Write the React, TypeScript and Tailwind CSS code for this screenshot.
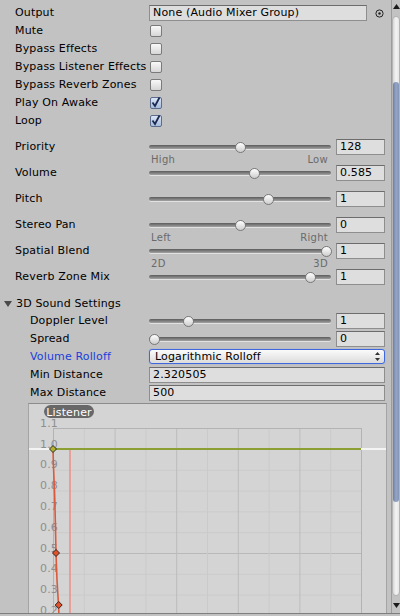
import React from "react";

type SliderProps = {
  label: string;
  value: string;
  pos: number;
  low?: string;
  high?: string;
  indent?: boolean;
  tall?: boolean;
};

const Field = ({ value, width }: { value: string; width: string }) => (
  <div
    className={`${width} h-[16px] shrink-0 flex items-center pl-[3px] pt-[1px] border border-[#8e8e8e] border-t-[#6c6c6c] bg-[#dedede] text-[11px] text-black whitespace-nowrap overflow-hidden`}
  >
    {value}
  </div>
);

const Checkbox = ({ checked }: { checked?: boolean }) =>
  checked ? (
    <div className="ml-[1px] w-[12px] h-[12px] rounded-[2px] border border-[#5c6c8c] bg-gradient-to-b from-[#dbe5f5] to-[#a7bcdd] relative">
      <svg width="12" height="13" viewBox="0 0 12 13" className="absolute left-[-1px] top-[-3px] overflow-visible">
        <path d="M2.5 7.5 L5 11 L9.5 2.5" stroke="#1c2a52" strokeWidth="1.8" fill="none" />
      </svg>
    </div>
  ) : (
    <div className="ml-[1px] w-[12px] h-[12px] rounded-[2px] border border-[#7a7a7a] bg-gradient-to-b from-[#f9f9f9] to-[#d6d6d6]" />
  );

const Label = ({ text, indent, blue }: { text: string; indent?: boolean; blue?: boolean }) => (
  <div
    className={`w-[149px] shrink-0 whitespace-nowrap pt-[1px] ${indent ? "pl-[30px]" : "pl-[15px]"} ${
      blue ? "text-[#1740dc]" : "text-black"
    }`}
  >
    {text}
  </div>
);

const CheckRow = ({ label, checked }: { label: string; checked?: boolean }) => (
  <div className="h-[18px] flex items-center">
    <Label text={label} />
    <Checkbox checked={checked} />
  </div>
);

const SliderRow = ({ label, value, pos, low, high, indent, tall }: SliderProps) => (
  <div className={`${tall ? "h-[26px]" : "h-[18px]"} flex items-start`}>
    <div className="h-[16px] flex items-center">
      <Label text={label} indent={indent} />
    </div>
    <div className="w-[182px] shrink-0 flex flex-col">
      <div className="relative h-[16px] flex items-center">
        <div className="w-full h-[4px] rounded-full bg-gradient-to-b from-[#5c5c5c] to-[#a3a3a3] shadow-[0_1px_0_#e2e2e2]" />
        <div
          className="absolute top-[3px] w-[11px] h-[11px] rounded-full border border-[#787878] bg-gradient-to-b from-white to-[#cdcdcd]"
          style={{ left: 5 + pos * 172 - 5.5 }}
        />
      </div>
      {low && (
        <div className="flex justify-between pl-[2px] pr-[3px] text-[10px] leading-[10px] text-[#6a6a6a] tracking-[0.3px]">
          <span>{low}</span>
          <span>{high}</span>
        </div>
      )}
    </div>
    <div className="ml-[5px]">
      <Field value={value} width="w-[49px]" />
    </div>
  </div>
);

const Graph = () => {
  const y = (v: number) => 45 + (1 - v) * 208;
  const labels = ["1.1", "1.0", "0.9", "0.8", "0.7", "0.6", "0.5", "0.4", "0.3", "0.2"];
  const vx = Array.from({ length: 11 }, (_, i) => 24 + i * 30.8);
  const hy = Array.from({ length: 11 }, (_, i) => i / 10);
  const diamond = (cx: number, cy: number) =>
    `M${cx} ${cy - 3.5} L${cx + 3.5} ${cy} L${cx} ${cy + 3.5} L${cx - 3.5} ${cy} Z`;
  return (
    <svg width="357" height="210" className="block">
      {hy.map((v) => (
        <line
          key={v}
          x1={24}
          x2={332}
          y1={y(v) + 0.5}
          y2={y(v) + 0.5}
          stroke={v === 0.5 ? "#b9b9b9" : "#cbcbcb"}
        />
      ))}
      {vx.map((x, i) => (
        <line
          key={i}
          x1={x + 0.5}
          x2={x + 0.5}
          y1={24}
          y2={210}
          stroke={i === 0 || i === 10 ? "#b3b3b3" : i % 2 === 0 ? "#bcbcbc" : "#cacaca"}
        />
      ))}
      <line x1={24} x2={332} y1={24.5} y2={24.5} stroke="#b3b3b3" />
      {labels.map((l, i) => (
        <text
          key={l}
          x={11}
          y={y(1.1 - i / 10) - 1.5}
          fontSize="11"
          fill="#8e8e8e"
          fontFamily="DejaVu Sans, sans-serif"
        >
          {l}
        </text>
      ))}
      <line x1={41} x2={41} y1={45} y2={210} stroke="#e8928a" strokeOpacity="0.8" strokeWidth="2" />
      <line x1={0} x2={24} y1={45} y2={45} stroke="#f4f4f4" strokeWidth="2" />
      <line x1={332} x2={357} y1={45} y2={45} stroke="#f4f4f4" strokeWidth="2" />
      <line x1={24} x2={332} y1={45} y2={45} stroke="#8c9f33" strokeWidth="2" />
      <polyline
        points="24,45 24.5,63 25.6,89 26.4,120 27,149 28,176 29.5,201 30,212"
        fill="none"
        stroke="#da5a3c"
        strokeWidth="1.6"
      />
      <path d={diamond(24, 45)} fill="#b3b030" stroke="#2e2e20" strokeWidth="1" />
      <path d={diamond(27, 149)} fill="#e0522c" stroke="#3a2018" strokeWidth="1" />
      <path d={diamond(29.7, 201)} fill="#e0522c" stroke="#3a2018" strokeWidth="1" />
      <rect x={15} y={1} width={50} height={13} rx={6.5} fill="#686868" />
      <text
        x={40}
        y={11.5}
        fontSize="11"
        fill="#ffffff"
        textAnchor="middle"
        fontFamily="DejaVu Sans, sans-serif"
      >
        Listener
      </text>
    </svg>
  );
};

const Scrollbar = () => (
  <div className="w-[9px] shrink-0 flex flex-col border-l border-[#9c9c9c]">
    <div className="h-[16px] flex justify-center pt-[4px]">
      <svg width="7" height="5" viewBox="0 0 7 5">
        <path d="M3.5 0 L7 5 L0 5 Z" fill="#1a1a1a" />
      </svg>
    </div>
    <div className="flex-1 rounded-[4px] border border-[#b4b4b4] bg-gradient-to-r from-[#d6d6d6] via-[#f4f4f4] to-[#e6e6e6] pt-[65px]">
      <div className="h-[420px] rounded-[4px] bg-gradient-to-r from-[#6c80a6] via-[#94a5c5] to-[#8495b7]" />
    </div>
    <div className="h-[17px] flex justify-center pt-[7px]">
      <svg width="7" height="5" viewBox="0 0 7 5">
        <path d="M0 0 L7 0 L3.5 5 Z" fill="#1a1a1a" />
      </svg>
    </div>
  </div>
);

export default function App() {
  return (
    <div className="w-[400px] h-[616px] bg-[#c2c2c2] flex flex-col overflow-hidden font-['DejaVu_Sans',sans-serif] text-[11px] tracking-[0.15px]">
      <div className="h-[613px] flex">
        <div className="w-[391px] shrink-0 flex flex-col pt-[4px] overflow-hidden">
          <div className="h-[18px] flex items-center">
            <Label text="Output" />
            <Field value="None (Audio Mixer Group)" width="w-[218px]" />
            <svg width="9" height="9" viewBox="0 0 9 9" className="ml-[8px]">
              <circle cx="4.5" cy="4.5" r="3.6" stroke="#222" fill="none" strokeWidth="1" />
              <circle cx="4.5" cy="4.5" r="1.2" fill="#222" />
            </svg>
          </div>
          <CheckRow label="Mute" />
          <CheckRow label="Bypass Effects" />
          <CheckRow label="Bypass Listener Effects" />
          <CheckRow label="Bypass Reverb Zones" />
          <CheckRow label="Play On Awake" checked />
          <CheckRow label="Loop" checked />

          <div className="mt-[9px] flex flex-col">
            <SliderRow tall label="Priority" value="128" pos={0.5} low="High" high="Low" />
            <SliderRow tall label="Volume" value="0.585" pos={0.585} />
            <SliderRow tall label="Pitch" value="1" pos={0.667} />
            <SliderRow tall label="Stereo Pan" value="0" pos={0.5} low="Left" high="Right" />
            <SliderRow tall label="Spatial Blend" value="1" pos={1} low="2D" high="3D" />
            <SliderRow tall label="Reverb Zone Mix" value="1" pos={0.909} />
          </div>

          <div className="h-[18px] flex items-center">
            <svg width="9" height="8" viewBox="0 0 9 8" className="ml-[4px] mr-[3px]">
              <path d="M0 1 L8 1 L4 7 Z" fill="#4a4a4a" />
            </svg>
            <span className="pt-[1px]">3D Sound Settings</span>
          </div>
          <SliderRow indent label="Doppler Level" value="1" pos={0.2} />
          <SliderRow indent label="Spread" value="0" pos={0} />
          <div className="h-[18px] flex items-start">
            <div className="h-[16px] flex items-center">
              <Label text="Volume Rolloff" indent blue />
            </div>
            <div className="w-[236px] h-[15px] flex items-center justify-between pl-[5px] pr-[4px] rounded-[3px] border border-[#3e68dc] bg-gradient-to-b from-[#fbfbfb] to-[#dcdcdc] shadow-[0_0_1px_#6d8ee8]">
              <span className="text-[11px] pt-[1px]">Logarithmic Rolloff</span>
              <svg width="5" height="9" viewBox="0 0 5 9">
                <path d="M2.5 0 L5 3 L0 3 Z M0 6 L5 6 L2.5 9 Z" fill="#333" />
              </svg>
            </div>
          </div>
          <div className="h-[18px] flex items-start">
            <div className="h-[16px] flex items-center">
              <Label text="Min Distance" indent />
            </div>
            <Field value="2.320505" width="w-[236px]" />
          </div>
          <div className="h-[18px] flex items-start">
            <div className="h-[16px] flex items-center">
              <Label text="Max Distance" indent />
            </div>
            <Field value="500" width="w-[236px]" />
          </div>

          <div className="flex-1 ml-[28px] w-[359px] border-l border-t border-r border-[#a4a4a4] border-t-[#8c8c8c] bg-[#d4d4d4] overflow-hidden">
            <Graph />
          </div>
        </div>
        <Scrollbar />
      </div>
      <div className="h-[3px] border-t border-[#7e7e7e] bg-[#c2c2c2]" />
    </div>
  );
}
